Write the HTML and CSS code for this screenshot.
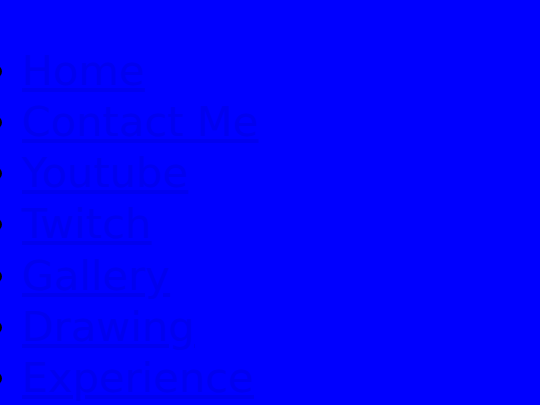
FILE: index.html
```html
<!DOCTYPE html>
<html>
<head>
<meta charset="utf-8">
<link rel="stylesheet" href="styles.css">
</head>
<body>
<ul class="nav">
  <li><a href="#">Home</a></li>
  <li><a href="#">Contact Me</a></li>
  <li><a href="#">Youtube</a></li>
  <li><a href="#">Twitch</a></li>
  <li><a href="#">Gallery</a></li>
  <li><a href="#">Drawing</a></li>
  <li><a href="#">Experience</a></li>
</ul>
</body>
</html>
```
FILE: styles.css
```css
html, body {
  margin: 0;
  padding: 0;
  background: #0000ff;
}
.nav {
  margin: 0;
  padding: 44.5px 0 0 22px;
  font-family: "DejaVu Sans", sans-serif;
  font-size: 41.6px;
  line-height: 51.3px;
  color: #000;
}
.nav a {
  color: #0000ee;
}
```
